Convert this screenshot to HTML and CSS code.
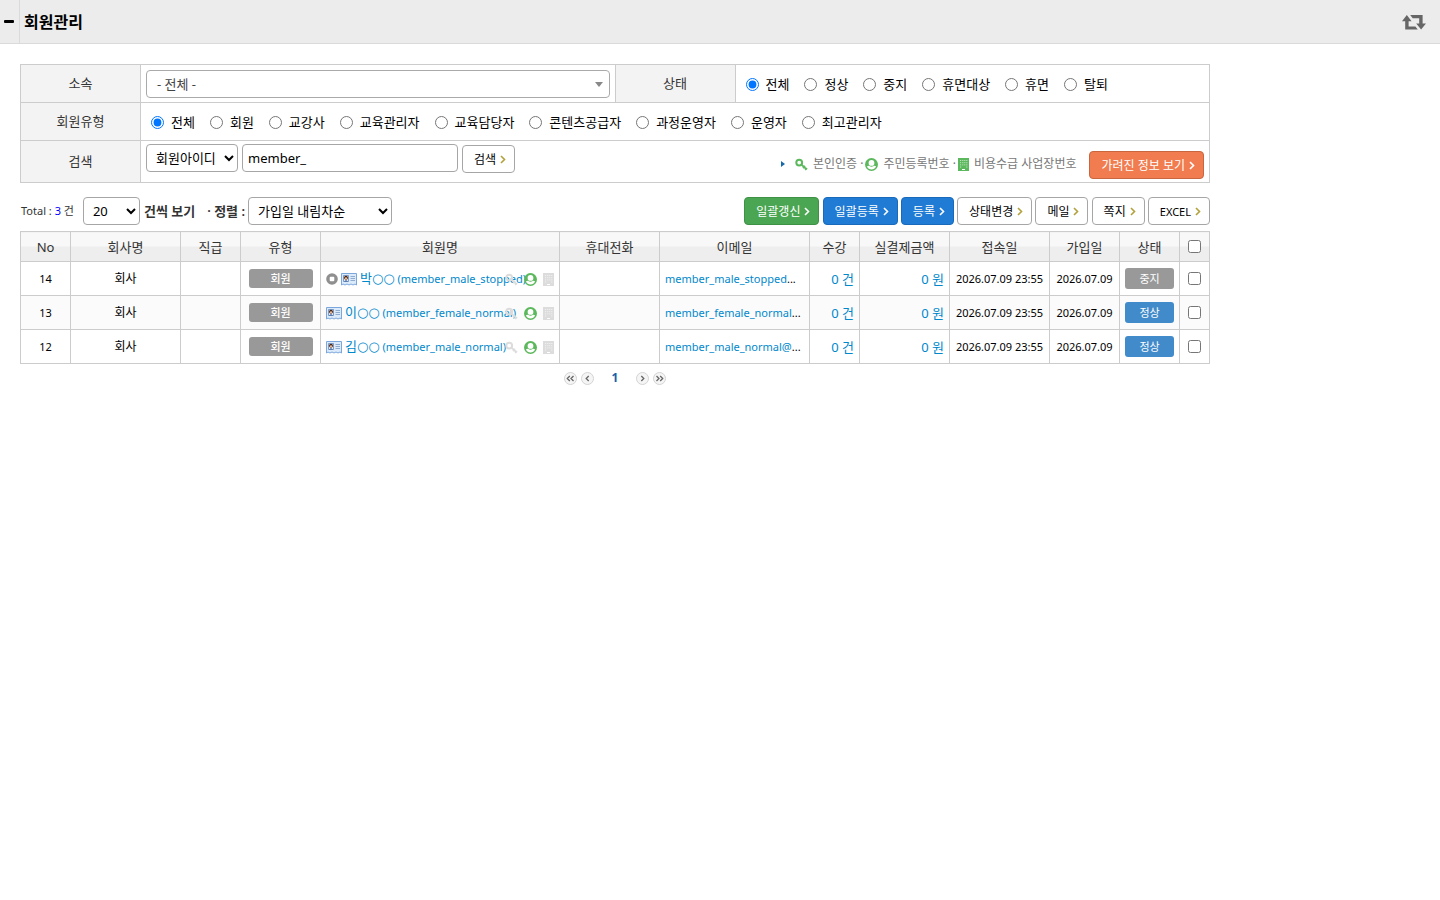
FILE: index.html
```html
<!DOCTYPE html>
<html lang="ko">
<head>
<meta charset="utf-8">
<title>회원관리</title>
<link rel="stylesheet" href="styles.css">
</head>
<body>
<svg class="sprite" aria-hidden="true">
  <symbol id="chev" viewBox="0 0 6 9"><path d="M1 1l3.5 3.5L1 8" fill="none" stroke="currentColor" stroke-width="1.6"/></symbol>
  <symbol id="key" viewBox="0 0 13 13"><circle cx="4.2" cy="4.600" r="2.900" fill="none" stroke="currentColor" stroke-width="2"/><path d="M6.300 6.500l5.400 4.800M8 10l2-2M10.200 12l1.800-1.900" fill="none" stroke="currentColor" stroke-width="1.800"/></symbol>
  <symbol id="user" viewBox="0 0 13 13"><circle cx="6.500" cy="6.500" r="6.500" fill="currentColor"/><circle cx="6.500" cy="4.900" r="2.900" fill="#fff"/><path d="M1.900 8.600C3 7.700 3.900 7.700 4.300 7.900c1.300 1 3.100 1 4.400 0 .8-.2 1.700.1 2.400.7-.9 1.900-2.600 3-4.600 3s-3.700-1.100-4.600-3z" fill="#fff"/></symbol>
  <symbol id="bldg" viewBox="0 0 11 13"><path d="M0 0h11v13H7v-2H4v2H0z" fill="currentColor"/><path d="M2 2.500h1.200M4.200 2.500h1.200M6.200 2.500h1.200M8.200 2.500h1.200M2 4.700h1.200M4.200 4.700h1.200M6.200 4.700h1.200M8.200 4.700h1.200M2 6.900h1.200M4.200 6.900h1.200M6.200 6.900h1.200M8.200 6.900h1.200M2 9h1.200M8.200 9h1.200" stroke="#fff" stroke-opacity=".6"/><path d="M0 12.500h11" stroke="currentColor"/></symbol>
  <symbol id="card" viewBox="0 0 16 13"><path d="M.5.500h15v11.500l-1.500-1-2 1-2-1-2 1-2-1-2 1-2-1-1.500 1z" fill="#dcebfb" stroke="#7ba7dc"/><path d="M2.500 2.500h5v6h-5z" fill="#fff" stroke="#5f83b8" stroke-width=".8"/><circle cx="5" cy="4.700" r="2" fill="#4a2413"/><circle cx="5" cy="5.300" r="1.100" fill="#f3c49b"/><path d="M3 8.500q2-2.500 4 0z" fill="#345f9e"/><path d="M9.500 3.500H14M9.500 5.500H14M9.500 7.500H14" stroke="#8fabd0"/></symbol>
  <symbol id="stop" viewBox="0 0 12 12"><circle cx="6" cy="6" r="5.800" fill="#8f8f8f"/><rect x="3.700" y="3.700" width="4.600" height="4.600" rx="1" fill="#fff"/></symbol>
  <symbol id="prev" viewBox="0 0 13 13"><circle cx="6.500" cy="6.500" r="6" fill="#f5f5f5" stroke="#d3d3d3"/><path d="M7.700 4L5.200 6.500l2.500 2.500" fill="none" stroke="#666" stroke-width="1.300"/></symbol>
  <symbol id="first" viewBox="0 0 13 13"><circle cx="6.500" cy="6.500" r="6" fill="#f5f5f5" stroke="#d3d3d3"/><path d="M5.800 4L3.300 6.500l2.500 2.500M9.500 4L7 6.500l2.500 2.500" fill="none" stroke="#666" stroke-width="1.300"/></symbol>
</svg>

<header class="topbar">
  <button class="fold" type="button" aria-label="메뉴 접기"></button>
  <h1 class="title">회원관리</h1>
  <button class="reload" type="button" aria-label="새로고침">
    <svg width="24" height="15" viewBox="0 0 24 15"><path d="M4.800 0L9.600 6.200H6.600v5.200h6.800l2.400 3.200H3.200V6.200H0zM8.200 0h12.400v8.400H24l-4.900 6.200-4.900-6.200h3V3.200h-6.500z" fill="#666"/></svg>
  </button>
</header>

<main class="content">
  <form>
  <table class="filter">
    <colgroup><col class="w120"><col><col class="w120"><col></colgroup>
    <tr>
      <th scope="row"><label for="org">소속</label></th>
      <td><div class="combo"><select id="org"><option>- 전체 -</option></select></div></td>
      <th scope="row">상태</th>
      <td><div class="radios">
        <label><input type="radio" name="st" checked>전체</label>
        <label><input type="radio" name="st">정상</label>
        <label><input type="radio" name="st">중지</label>
        <label><input type="radio" name="st">휴면대상</label>
        <label><input type="radio" name="st">휴면</label>
        <label><input type="radio" name="st">탈퇴</label>
      </div></td>
    </tr>
    <tr>
      <th scope="row">회원유형</th>
      <td colspan="3"><div class="radios">
        <label><input type="radio" name="ty" checked>전체</label>
        <label><input type="radio" name="ty">회원</label>
        <label><input type="radio" name="ty">교강사</label>
        <label><input type="radio" name="ty">교육관리자</label>
        <label><input type="radio" name="ty">교육담당자</label>
        <label><input type="radio" name="ty">콘텐츠공급자</label>
        <label><input type="radio" name="ty">과정운영자</label>
        <label><input type="radio" name="ty">운영자</label>
        <label><input type="radio" name="ty">최고관리자</label>
      </div></td>
    </tr>
    <tr>
      <th scope="row"><label for="kw">검색</label></th>
      <td colspan="3"><div class="search">
        <div class="fields">
          <select class="sel key-sel" aria-label="검색 항목"><option>회원아이디</option></select>
          <input class="kw" id="kw" type="text" value="member_">
          <button class="btn" type="button">검색<svg><use href="#chev"/></svg></button>
        </div>
        <div class="reveal">
          <div class="legend"><i class="tri"></i><svg class="ic ok"><use href="#key"/></svg><span>본인인증 ·</span><svg class="ic ok near"><use href="#user"/></svg><span>주민등록번호 ·</span><svg class="ic slim ok near"><use href="#bldg"/></svg><span>비용수급 사업장번호</span></div>
          <button class="btn orange" type="button">가려진 정보 보기<svg><use href="#chev"/></svg></button>
        </div>
      </div></td>
    </tr>
  </table>
  </form>

  <div class="toolbar">
    <div class="left">
      <span class="total">Total : <em>3</em> 건</span>
      <select class="sel size-sel" id="size"><option>20</option></select>
      <label class="strong per" for="size">건씩 보기</label>
      <label class="strong sort" for="sort">· 정렬 :</label>
      <select class="sel sort-sel" id="sort"><option>가입일 내림차순</option></select>
    </div>
    <div class="actions">
      <button class="btn green" type="button">일괄갱신<svg><use href="#chev"/></svg></button>
      <button class="btn blue" type="button">일괄등록<svg><use href="#chev"/></svg></button>
      <button class="btn blue" type="button">등록<svg><use href="#chev"/></svg></button>
      <button class="btn" type="button">상태변경<svg><use href="#chev"/></svg></button>
      <button class="btn" type="button">메일<svg><use href="#chev"/></svg></button>
      <button class="btn" type="button">쪽지<svg><use href="#chev"/></svg></button>
      <button class="btn latin" type="button">EXCEL<svg><use href="#chev"/></svg></button>
    </div>
  </div>

  <table class="list">
    <colgroup><col class="w50"><col class="w110"><col class="w60"><col class="w80"><col><col class="w100"><col class="w150"><col class="w50"><col class="w90"><col class="w100"><col class="w70"><col class="w60"><col class="w30"></colgroup>
    <thead><tr><th>No</th><th>회사명</th><th>직급</th><th>유형</th><th>회원명</th><th>휴대전화</th><th>이메일</th><th>수강</th><th>실결제금액</th><th>접속일</th><th>가입일</th><th>상태</th><th><input type="checkbox" aria-label="전체 선택"></th></tr></thead>
    <tbody>
      <tr>
        <td class="no">14</td><td>회사</td><td></td><td><span class="tag">회원</span></td>
        <td><div class="name"><svg class="st"><use href="#stop"/></svg><svg class="cd"><use href="#card"/></svg><a href="#"><span class="who">박○○</span> (member_male_stopped)</a><div class="marks"><svg class="ic"><use href="#key"/></svg><svg class="ic ok"><use href="#user"/></svg><svg class="ic slim"><use href="#bldg"/></svg></div></div></td>
        <td></td><td class="mail"><a href="#">member_male_stopped</a>...</td><td class="num"><a href="#">0 건</a></td><td class="num"><a href="#">0 원</a></td><td class="date">2026.07.09 23:55</td><td class="date">2026.07.09</td><td><span class="state">중지</span></td><td><input type="checkbox" aria-label="14 선택"></td>
      </tr>
      <tr>
        <td class="no">13</td><td>회사</td><td></td><td><span class="tag">회원</span></td>
        <td><div class="name"><svg class="cd"><use href="#card"/></svg><a href="#"><span class="who">이○○</span> (member_female_normal)</a><div class="marks"><svg class="ic"><use href="#key"/></svg><svg class="ic ok"><use href="#user"/></svg><svg class="ic slim"><use href="#bldg"/></svg></div></div></td>
        <td></td><td class="mail"><a href="#">member_female_normal</a>...</td><td class="num"><a href="#">0 건</a></td><td class="num"><a href="#">0 원</a></td><td class="date">2026.07.09 23:55</td><td class="date">2026.07.09</td><td><span class="state on">정상</span></td><td><input type="checkbox" aria-label="13 선택"></td>
      </tr>
      <tr>
        <td class="no">12</td><td>회사</td><td></td><td><span class="tag">회원</span></td>
        <td><div class="name"><svg class="cd"><use href="#card"/></svg><a href="#"><span class="who">김○○</span> (member_male_normal)</a><div class="marks"><svg class="ic"><use href="#key"/></svg><svg class="ic ok"><use href="#user"/></svg><svg class="ic slim"><use href="#bldg"/></svg></div></div></td>
        <td></td><td class="mail"><a href="#">member_male_normal@</a>...</td><td class="num"><a href="#">0 건</a></td><td class="num"><a href="#">0 원</a></td><td class="date">2026.07.09 23:55</td><td class="date">2026.07.09</td><td><span class="state on">정상</span></td><td><input type="checkbox" aria-label="12 선택"></td>
      </tr>
    </tbody>
  </table>

  <nav class="pager" aria-label="페이지">
    <a href="#" aria-label="처음"><svg><use href="#first"/></svg></a>
    <a href="#" aria-label="이전"><svg><use href="#prev"/></svg></a>
    <strong>1</strong>
    <a href="#" aria-label="다음"><svg class="flip"><use href="#prev"/></svg></a>
    <a href="#" aria-label="마지막"><svg class="flip"><use href="#first"/></svg></a>
  </nav>
</main>
</body>
</html>
```
FILE: styles.css
```css
* { box-sizing: border-box; }
body { margin: 0; background: #fff; color: #000; font: 12px/18px "Noto Sans", "Noto Sans CJK KR", sans-serif; }
button, select, input { font-family: inherit; }
svg { display: block; flex: none; }
a { color: #0088cc; text-decoration: none; }
.sprite { position: absolute; width: 0; height: 0; }

.topbar { display: flex; align-items: center; height: 44px; background: #ececec; border-bottom: 1px solid #dadada; }
.topbar button { border: 0; background: none; padding: 0; }
.topbar .fold { display: flex; align-items: center; justify-content: flex-end; align-self: stretch; width: 20px; padding-right: 5px; border-right: 1px solid #dadada; }
.fold::after { content: ""; width: 10px; height: 3px; border-radius: 1px; background: #000; }
.title { flex: 1; margin: 0; padding-left: 4px; font-size: 16px; line-height: 24px; font-weight: 700; }
.topbar .reload { padding: 2px 14px 0 0; }

.content { max-width: 1230px; padding: 20px; }
table { width: 100%; border-collapse: collapse; table-layout: fixed; }
th, td { padding: 0; border: 1px solid #ccc; }
.w30 { width: 30px; } .w50 { width: 50px; } .w60 { width: 60px; } .w70 { width: 70px; } .w80 { width: 80px; }
.w90 { width: 90px; } .w100 { width: 100px; } .w110 { width: 110px; } .w120 { width: 120px; } .w150 { width: 150px; }

.filter th { padding-bottom: 2px; background: #f3f3f3; color: #333; font-size: 13px; font-weight: 400; }
.filter td { height: 38px; padding: 3px 5px; }
.combo { position: relative; }
.combo::after { content: ""; position: absolute; right: 7px; top: 12px; border: 4px solid transparent; border-top: 5px solid #888; border-bottom: 0; pointer-events: none; }
.combo select { display: block; width: 100%; height: 28px; padding: 0 10px; border: 1px solid #aaa; border-radius: 4px; background: #fff; color: #444; font-size: 13px; appearance: none; }
.radios { display: flex; gap: 15px; padding: 1px 5px 0; font-size: 13px; }
.radios label { display: flex; align-items: center; gap: 7px; white-space: nowrap; }
input[type="radio"], input[type="checkbox"] { width: 13px; height: 13px; margin: 0; }
.search { display: flex; justify-content: space-between; height: 35px; }
.fields { display: flex; align-items: flex-start; gap: 4px; }
.sel, .kw { height: 28px; border: 1px solid #a6a6a6; border-radius: 4px; background: #fff; color: #000; font-size: 13px; }
.sel { padding: 0 0 0 5px; }
.key-sel { width: 92px; }
.kw { width: 216px; padding: 0 5px; }
.fields .btn { margin-top: 1px; }
.reveal { display: flex; align-items: flex-start; align-self: flex-end; gap: 13px; }
.legend { display: flex; align-items: center; gap: 5px; height: 26px; color: #777; white-space: nowrap; }
.tri { border: 3px solid transparent; border-left: 4px solid #1669a8; border-right: 0; margin-right: 5px; }
.ic { width: 13px; height: 13px; color: #dcdcdc; }
.ic.slim { width: 11px; }
.ic.ok { color: #5cb85c; }
.near { margin-left: -3px; }

.btn { display: inline-flex; align-items: center; gap: 4px; height: 28px; padding: 0 8px 0 11px; border: 1px solid #a6a6a6; border-radius: 4px; background: #fff; color: #000; font-size: 12px; white-space: nowrap; vertical-align: top; }
.btn svg { width: 6px; height: 9px; color: #b3a13c; }
.btn.latin { font-size: 11px; }
.btn.green { background: #4aa652; border-color: #3f9146; }
.btn.blue { background: #1f7bd4; border-color: #1a6abb; }
.btn.orange { background: #f17c4f; border-color: #c7663f; }
.btn.green, .btn.blue, .btn.orange, .btn.green svg, .btn.blue svg, .btn.orange svg { color: #fff; }

.toolbar { display: flex; justify-content: space-between; padding: 14px 0 6px; font-size: 13px; }
.left { display: flex; align-items: center; }
.total { padding: 0 9px 0 1px; font-size: 11px; color: #333; }
.total em { color: #00f; font-style: normal; }
.size-sel { width: 57px; }
.strong { padding: 0 4px; font-weight: 600; font-size: 13px; color: #333; }
.sort { padding: 0 3px 0 8px; }
.sort-sel { width: 144px; }
.actions { height: 28px; font-size: 12px; }

.list th { height: 30px; background: linear-gradient(#f8f8f8 50%, #eee 50%); color: #333; font-size: 13px; font-weight: 400; }
.list td { height: 34px; text-align: center; white-space: nowrap; }
.list tbody tr:nth-child(even) { background: #fbfbfb; }
.list input { display: block; margin: 0 auto; }
.list .no, .list .date { font-size: 11px; }
.list .mail { padding-left: 5px; text-align: left; font-size: 11px; }
.list .num { padding-right: 5px; text-align: right; font-size: 13px; }
.tag, .state { display: block; margin: 0 auto; border-radius: 3px; background: #999; color: #fff; font-size: 11px; }
.tag { width: 64px; line-height: 19px; font-weight: 500; }
.state { width: 49px; line-height: 21px; }
.state.on { background: #428bca; }
.name { position: relative; display: flex; align-items: center; gap: 3px; padding: 1px 0 0 5px; font-size: 11px; }
.who { font: 13px/18px "DejaVu Sans", "Noto Sans CJK KR", sans-serif; }
.st { width: 12px; height: 12px; }
.cd { width: 16px; height: 13px; }
.marks { position: absolute; right: 5px; top: 4px; display: flex; gap: 6px; }

.pager { display: flex; justify-content: center; align-items: center; gap: 4px; padding-top: 5px; }
.pager strong { padding: 0 14px; color: #1a5fa8; font-size: 12px; }
.pager svg { width: 13px; height: 13px; }
.flip { transform: scaleX(-1); }
```
